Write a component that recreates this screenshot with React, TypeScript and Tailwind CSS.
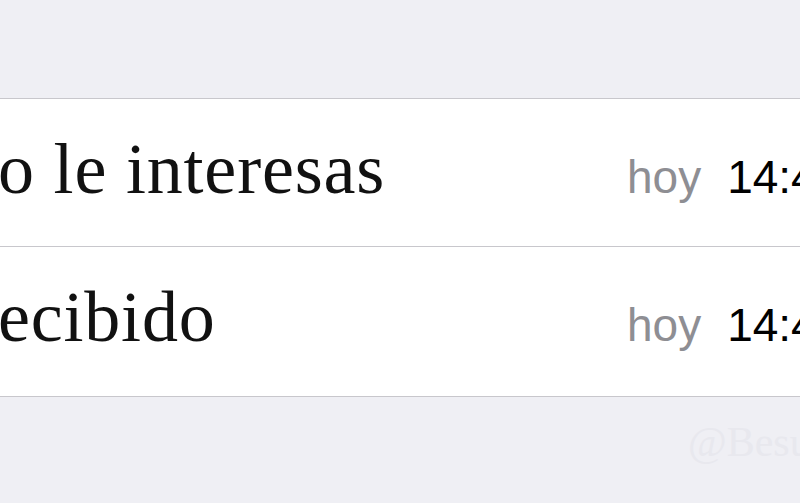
import React from 'react';

const rows = [
  { text: 'o le interesas', h: 'h-[147px]' },
  { text: 'ecibido', h: 'h-[150px]' },
];

export default function App() {
  return (
    <div className="w-[800px] h-[503px] overflow-hidden bg-[#efeff4] flex flex-col">
      <div className="h-[98px] shrink-0" />
      <div className="border-t border-b border-[#c8c7cc] bg-white shrink-0">
        {rows.map((r, i) => (
          <div
            key={i}
            className={`${r.h} flex items-start overflow-hidden whitespace-nowrap ${i > 0 ? 'border-t border-[#c8c7cc]' : ''}`}
          >
            <div className="w-[627px] shrink-0 pt-[34px] -ml-[2px]">
              <span className="font-['Liberation_Serif',serif] text-[72px] leading-none text-[#111] tracking-[0.8px]">{r.text}</span>
            </div>
            <div className="pt-[55px] shrink-0 ml-[2px] font-['Liberation_Sans',Arial,sans-serif] text-[46px] leading-none">
              <span className="text-[#8e8e93]">hoy</span>
              <span className="text-black ml-[26px]">14:42</span>
            </div>
          </div>
        ))}
      </div>
      <div className="flex-1 whitespace-nowrap overflow-hidden pl-[688px] pt-[24px]">
        <span className="font-['Liberation_Serif',serif] text-[42px] leading-none text-[#e8e8ee]">@Besugo</span>
      </div>
    </div>
  );
}
